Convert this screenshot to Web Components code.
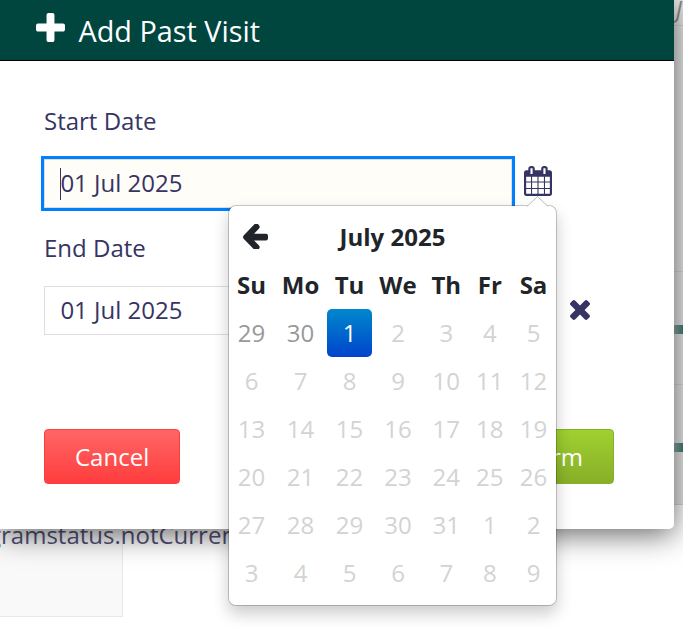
<!DOCTYPE html>
<html lang="en">
<head>
<meta charset="utf-8">
<title>Add Past Visit</title>
<style>
html,body{margin:0;height:100%;overflow:hidden;background:#fff}
body{font:24px/36px "Open Sans",sans-serif;color:#363463}
</style>
</head>
<body>
<visit-app></visit-app>
<script>
const ICONS = {
  plus: ['192 128 1408 1408', 'M1600 736v192q0 40-28 68t-68 28h-416v416q0 40-28 68t-68 28h-192q-40 0-68-28t-28-68v-416h-416q-40 0-68-28t-28-68v-192q0-40 28-68t68-28h416v-416q0-40 28-68t68-28h192q40 0 68 28t28 68v416h416q40 0 68 28t28 68z'],
  times: ['302 366 1188 1188', 'M1490 1322q0 40-28 68l-136 136q-28 28-68 28t-68-28l-294-294-294 294q-28 28-68 28t-68-28l-136-136q-28-28-28-68t28-68l294-294-294-294q-28-28-28-68t28-68l136-136q28-28 68-28t68 28l294 294 294-294q28-28 68-28t68 28l136 136q28 28 28 68t-28 68l-294 294 294 294q28 28 28 68z'],
  calendar: ['64 0 1664 1792', 'M192 1664h288v-288h-288v288zm352 0h320v-288h-320v288zm-352-352h288v-320h-288v320zm352 0h320v-320h-320v320zm-352-384h288v-288h-288v288zm736 736h320v-288h-320v288zm-384-736h320v-288h-320v288zm768 736h288v-288h-288v288zm-384-352h320v-320h-320v320zm-352-864v-288q0-13-9.5-22.5t-22.5-9.5h-64q-13 0-22.5 9.5t-9.5 22.5v288q0 13 9.5 22.5t22.5 9.5h64q13 0 22.5-9.5t9.5-22.5zm736 864h288v-320h-288v320zm-384-384h320v-288h-320v288zm384 0h288v-288h-288v288zm32-480v-288q0-13-9.5-22.5t-22.5-9.5h-64q-13 0-22.5 9.5t-9.5 22.5v288q0 13 9.5 22.5t22.5 9.5h64q13 0 22.5-9.5t9.5-22.5zm384-64v1280q0 52-38 90t-90 38h-1408q-52 0-90-38t-38-90v-1280q0-52 38-90t90-38h128v-96q0-66 47-113t113-47h64q66 0 113 47t47 113v96h384v-96q0-66 47-113t113-47h64q66 0 113 47t47 113v96h128q52 0 90 38t38 90z'],
  back: ['192 219 1472 1420', 'M1664 896v128q0 53-32.500 90.500t-84.500 37.500h-704l293 294q38 36 38 90t-38 90l-75 76q-37 37-90 37-52 0-91-37l-651-652q-37-37-37-90 0-52 37-91l651-650q38-38 91-38 52 0 90 38l75 74q38 38 38 91t-38 91l-293 293h704q52 0 84.500 37.500t32.500 90.500z']
};

function define(name, render) {
  customElements.define(name, class extends HTMLElement {
    connectedCallback() {
      if (!this.shadowRoot) this.attachShadow({mode: 'open'}).innerHTML = render(this);
    }
  });
}

define('app-icon', el => {
  const [box, d] = ICONS[el.getAttribute('name')];
  return `<style>:host{display:block;flex:none}svg{display:block;width:100%;height:100%}</style>
  <svg viewBox="${box}" preserveAspectRatio="none" fill="currentColor"><path d="${d}"/></svg>`;
});

define('date-field', el => `<style>
  :host{display:block}
  label{display:block;height:36px}
  .row{display:flex;margin-top:20px}
  .box{box-sizing:border-box;width:468px;height:49px;border:1px solid #ddd;padding:0 15px;display:flex;align-items:center;background:#fff}
  :host([active]) .box{background:#fffdf8;outline:3px solid #007fff}
  i{display:none;width:1px;height:32px;background:#363463;margin-right:-1px}
  :host([active]) i{display:block}
  .box span{padding:0 0 2px .4px;line-height:36px}
  </style>
  <label>${el.getAttribute('label')}</label>
  <div class="row"><div class="box"><i></i><span>${el.getAttribute('value')}</span></div><slot></slot></div>`);

define('app-button', () => `<style>
  :host{display:flex;box-sizing:border-box;height:55px;padding:0 30px;align-items:center;justify-content:center;border:1px solid #ff3d3d;border-radius:4px;color:#fff;background:linear-gradient(#ff6666,#ff3d3d)}
  :host([kind=confirm]){border-color:#88af28;background:linear-gradient(#9fd130,#88af28)}
  </style><slot></slot>`);

define('visit-dialog', () => `<style>
  :host{display:flex;flex-direction:column;box-sizing:border-box;width:674px;height:529px;background:#fff;border-radius:0 0 5px 0;box-shadow:0 5px 30px rgba(0,0,0,.62)}
  header{box-sizing:border-box;height:61px;background:#00463f;border-bottom:1px solid #000;color:#fff;display:flex;padding:0 36px;gap:13.500px;font-size:28.8px;line-height:62px}
  header app-icon{width:29px;height:29px;margin-top:13px}
  main{padding:42px 44px 0;display:flex;flex-direction:column}
  .end{margin-top:22px}
  .cal{width:28px;height:30px;margin:7px 0 0 12px}
  .x{width:20px;height:20px;margin:14px 0 0 58px}
  footer{display:flex;justify-content:space-between;width:570px;margin-top:94px}
  </style>
  <header><app-icon name="plus"></app-icon><span>Add Past Visit</span></header>
  <main>
    <date-field active label="Start Date" value="01 Jul 2025"><app-icon class="cal" name="calendar"></app-icon></date-field>
    <date-field class="end" label="End Date" value="01 Jul 2025"><app-icon class="x" name="times"></app-icon></date-field>
    <footer><app-button>Cancel</app-button><app-button kind="confirm">Confirm</app-button></footer>
  </main>`);

define('date-picker', () => {
  const days = [29, 30];
  for (let d = 1; d <= 31; d++) days.push(d);
  for (let d = 1; d <= 9; d++) days.push(d);
  const cls = i => i < 2 ? 'old' : i === 2 ? 'on' : '';
  return `<style>
  :host{display:block;box-sizing:border-box;width:329px;height:401px;padding:7px 0 0 0;background:#fff;border:1px solid rgba(0,0,0,.2);background-clip:padding-box;border-radius:8px;box-shadow:0 8px 16px rgba(0,0,0,.2);color:#212529;line-height:48px;text-align:center}
  .tip{position:absolute;left:298px;top:-10px;width:21px;height:11px}
  .grid{display:grid;grid-template-columns:45px 53px 45px 52px 44.500px 42.500px 45px;grid-auto-rows:48px}
  .prev{display:flex;align-items:center;justify-content:center}
  .prev app-icon{width:25px;height:25px;margin:-2px 0 0 7px}
  .month{grid-column:2 / 7}
  b{font-weight:700}
  .d{color:#d3d3d3}
  .old{color:#999}
  .on{color:#fff;background:linear-gradient(#08c,#04c);border-radius:5px}
  </style>
  <svg class="tip" viewBox="0 0 21 11"><path d="M0 10.500 10.500 .5 21 10.500V11H0z" fill="#fff"/><path d="M0 10.500 10.500 .5 21 10.500" fill="none" stroke="#bbb"/></svg>
  <div class="grid"><span class="prev"><app-icon name="back"></app-icon></span><b class="month">July 2025</b><span></span>
  ${['Su','Mo','Tu','We','Th','Fr','Sa'].map(t => `<b>${t}</b>`).join('')}
  ${days.map((d, i) => `<span class="d ${cls(i)}">${d}</span>`).join('')}</div>`;
});

define('page-backdrop', () => `<style>
  :host{display:grid;grid-template-columns:1fr 20px;height:631px;overflow:hidden}
  .left{display:flex;flex-direction:column;padding-top:517px}
  .text{white-space:nowrap;height:0;position:relative;z-index:1;opacity:.85;margin-left:-12px}
  .panel{box-sizing:border-box;width:123px;height:100px;background:#f9f9f9;border:solid #e9e9e9;border-width:0 1px 1px 0}
  .right{display:grid;grid-template-rows:26px 246px 113px 120px;align-content:start}
  .right div{border-bottom:1px solid #d8d8d8;background:#e9e9e9;box-sizing:border-box;overflow:hidden}
  .j{font-style:italic;color:#8b8b8b;line-height:18px;text-align:right;padding-right:1px}
  .bar{padding-top:53px}
  .bar::before{content:"";display:block;height:9px;background:linear-gradient(90deg,#94b1ad 11px,#417970)}
  .bar.two{padding-top:58px}
  </style>
  <div class="left"><div class="text">gramstatus.notCurrent</div><div class="panel"></div></div>
  <div class="right"><div class="j">J</div><div></div><div class="bar"></div><div class="bar two"></div></div>`);

define('visit-app', () => `<style>
  :host{display:block;position:relative;width:683px;height:631px;overflow:hidden}
  visit-dialog{position:absolute;left:0;top:0;z-index:2}
  date-picker{position:absolute;left:228px;top:205px;z-index:3}
  </style>
  <page-backdrop></page-backdrop><visit-dialog></visit-dialog><date-picker></date-picker>`);
</script>
</body>
</html>
